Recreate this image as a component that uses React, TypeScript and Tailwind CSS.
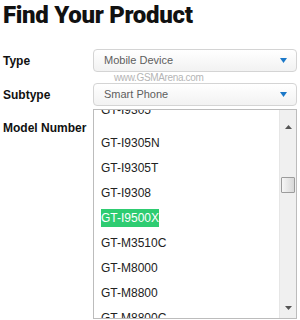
import React from "react";

const items = [
  "GT-I9305N",
  "GT-I9305T",
  "GT-I9308",
  "GT-I9500X",
  "GT-M3510C",
  "GT-M8000",
  "GT-M8800",
  "GT-M8800C",
];

function Arrow() {
  return (
    <svg width="7" height="5" viewBox="0 0 7 5" className="shrink-0">
      <path d="M0 0 H7 L3.5 5 Z" fill="#1b78c8" />
    </svg>
  );
}

function Select({ value }: { value: string }) {
  return (
    <div className="flex h-[23px] w-[204px] items-center justify-between rounded-[4px] border border-[#d4d4d4] bg-gradient-to-b from-white to-[#f2f2f2] pl-[10px] pr-[9px] text-[11px] text-[#5e5e5e]">
      <span>{value}</span>
      <Arrow />
    </div>
  );
}

export default function App() {
  return (
    <div
      className="h-[320px] w-[300px] overflow-hidden bg-white pl-[3px]"
      style={{ fontFamily: '"Liberation Sans", Arial, sans-serif' }}
    >
      <h1
        className="pt-[2px] text-[24px] font-black leading-[26px] tracking-[-0.3px] text-[#111]"
        style={{ fontFamily: 'Roboto, "Liberation Sans", sans-serif' }}
      >
        Find Your Product
      </h1>
      <div className="mt-[21px] flex items-center">
        <div className="w-[90px] text-[12px] font-bold text-[#111]">Type</div>
        <Select value="Mobile Device" />
      </div>
      <div className="flex h-[11px] items-center pl-[111px] text-[10px] leading-[11px] tracking-[-0.35px] text-[#b5b5b5]">
        www.GSMArena.com
      </div>
      <div className="flex items-center">
        <div className="w-[90px] text-[12px] font-bold text-[#111]">Subtype</div>
        <Select value="Smart Phone" />
      </div>
      <div className="mt-[3px] flex items-start">
        <div className="w-[90px] pt-[10px] text-[12px] font-bold text-[#111]">Model Number</div>
        <div className="flex h-[210px] w-[204px] overflow-hidden border border-[#bcbcbc] bg-white">
          <div className="flex-1 overflow-hidden">
            <div className="mt-[-12px] flex flex-col">
              <div className="h-[32px] pl-[7px] text-[12px] leading-[25px] text-[#222]">GT-I9305</div>
              {items.map((t) => (
                <div key={t} className="flex h-[25px] items-center pl-[7px] text-[12px] text-[#222]">
                  {t === "GT-I9500X" ? (
                    <span className="bg-[#2ecc71] py-[2px] leading-[14px] text-white">{t}</span>
                  ) : (
                    <span>{t}</span>
                  )}
                </div>
              ))}
            </div>
          </div>
          <div className="relative w-[17px] border-l border-[#e6e6e6] bg-[#f0f0f0]">
            <svg width="7" height="4" viewBox="0 0 7 4" className="absolute left-[5px] top-[15px]">
              <path d="M0 4 H7 L3.5 0 Z" fill="#555" />
            </svg>
            <div className="absolute left-[1px] top-[67px] h-[16px] w-[14px] rounded-[1px] border border-[#9c9c9c] bg-gradient-to-r from-[#f6f6f6] to-[#d8d8d8]" />
            <svg width="7" height="4" viewBox="0 0 7 4" className="absolute bottom-[8px] left-[5px]">
              <path d="M0 0 H7 L3.5 4 Z" fill="#555" />
            </svg>
          </div>
        </div>
      </div>
    </div>
  );
}
